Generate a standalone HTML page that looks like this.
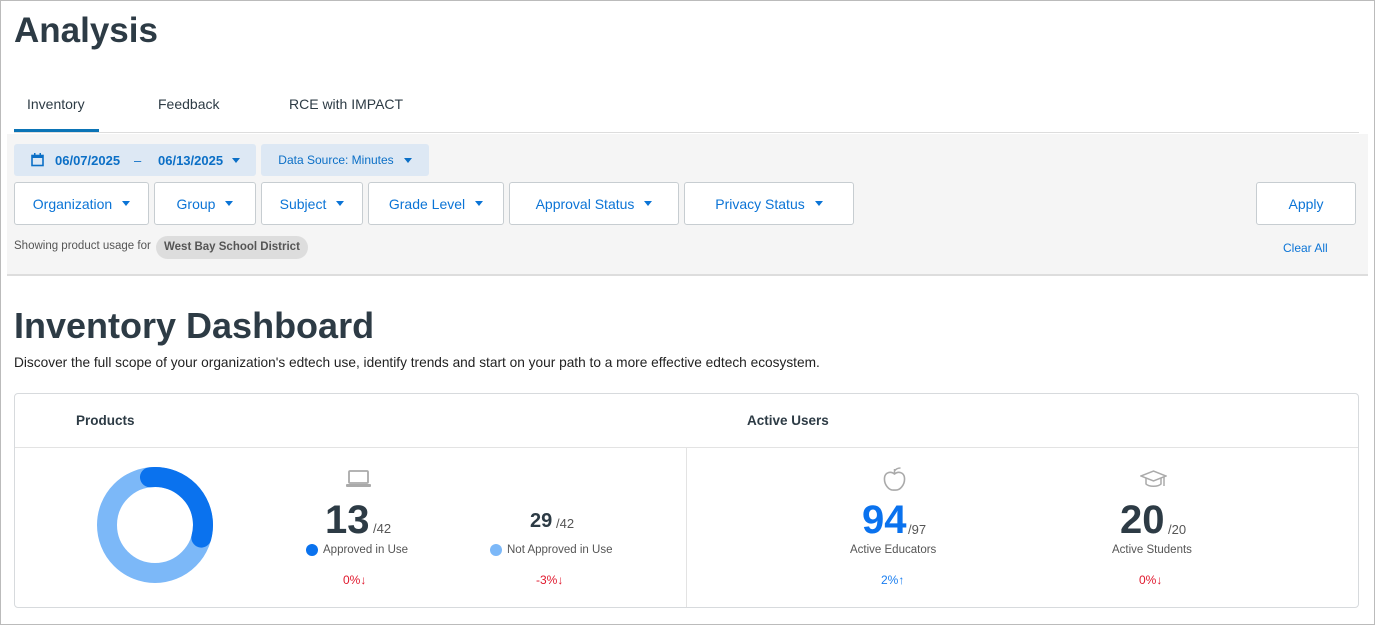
<!DOCTYPE html>
<html><head><style>
*{box-sizing:border-box;margin:0;padding:0}
body{width:1375px;height:625px;background:#fff;font-family:"Liberation Sans",sans-serif;color:#2d3b45;position:relative;overflow:hidden}
.frame{position:absolute;left:0;top:0;width:1375px;height:625px;border:1px solid #bbb;pointer-events:none}
.a{position:absolute}
h1{position:absolute;left:14px;top:11px;font-size:35px;font-weight:bold;color:#2d3b45}
.tab{position:absolute;top:96px;font-size:14px;color:#2d3b45}
.panel{position:absolute;left:7px;top:134px;width:1361px;height:142px;background:#f5f5f5;border-bottom:2px solid #ddd}
.chip{position:absolute;top:144px;height:32px;background:#dde8f4;border-radius:3px;color:#0b6fc6;font-size:13px;display:flex;align-items:center}
.btn{position:absolute;top:182px;height:43px;background:#fff;border:1px solid #c7cdd1;border-radius:3px;color:#0b74d6;font-size:14px;display:flex;align-items:center;justify-content:center}
.caret{display:inline-block;width:0;height:0;border-left:4px solid transparent;border-right:4px solid transparent;border-top:5px solid currentColor;margin-left:10px}
.num{position:absolute;text-align:center;font-weight:bold}
.pct{position:absolute;font-size:12px;text-align:center}
</style></head><body>
<h1>Analysis</h1>
<div class="tab" style="left:27px">Inventory</div>
<div class="tab" style="left:158px">Feedback</div>
<div class="tab" style="left:289px">RCE with IMPACT</div>
<div class="a" style="left:14px;top:132px;width:1345px;height:1px;background:#ddd"></div>
<div class="a" style="left:14px;top:129px;width:85px;height:3px;background:#0b74b6"></div>
<div class="panel"></div>
<div class="chip" style="left:14px;width:242px;font-weight:bold">
<svg class="a" style="left:17px;top:9px" width="13" height="14" viewBox="0 0 13 14"><rect x="1" y="2.5" width="11" height="10" fill="none" stroke="#0b6fc6" stroke-width="1.6"/><rect x="1" y="2.5" width="11" height="2.5" fill="#0b6fc6"/><rect x="3" y="0" width="1.5" height="3" fill="#0b6fc6"/><rect x="8.5" y="0" width="1.5" height="3" fill="#0b6fc6"/></svg>
<span class="a" style="left:41px">06/07/2025</span><span class="a" style="left:120px;font-weight:normal">–</span><span class="a" style="left:144px">06/13/2025</span><span class="caret a" style="left:208px;top:14px"></span></div>
<div class="chip" style="left:261px;width:168px;justify-content:center;font-size:12px">Data Source: Minutes<span class="caret"></span></div>
<div class="btn" style="left:14px;width:135px">Organization<span class="caret"></span></div>
<div class="btn" style="left:154px;width:102px">Group<span class="caret"></span></div>
<div class="btn" style="left:261px;width:102px">Subject<span class="caret"></span></div>
<div class="btn" style="left:368px;width:136px">Grade Level<span class="caret"></span></div>
<div class="btn" style="left:509px;width:170px">Approval Status<span class="caret"></span></div>
<div class="btn" style="left:684px;width:170px">Privacy Status<span class="caret"></span></div>
<div class="btn" style="left:1256px;width:100px">Apply</div>
<div class="a" style="left:14px;top:240px;font-size:11.5px;color:#555">Showing product usage for</div>
<div class="a" style="left:156px;top:236px;height:23px;padding:0 8px;background:#ddd;border-radius:12px;font-size:11.5px;font-weight:bold;color:#555;line-height:23px">West Bay School District</div>
<div class="a" style="left:1283px;top:241px;font-size:12px;color:#0b74d6">Clear All</div>
<div class="a" style="left:14px;top:305px;font-size:36px;font-weight:bold">Inventory Dashboard</div>
<div class="a" style="left:14px;top:355px;font-size:13.7px;color:#222">Discover the full scope of your organization's edtech use, identify trends and start on your path to a more effective edtech ecosystem.</div>
<div class="a" style="left:14px;top:393px;width:1345px;height:215px;border:1px solid #d7dadd;border-radius:4px"></div>
<div class="a" style="left:15px;top:447px;width:1343px;height:1px;background:#e3e3e3"></div>
<div class="a" style="left:686px;top:448px;width:1px;height:159px;background:#e3e3e3"></div>
<div class="a" style="left:76px;top:413px;font-size:13.5px;font-weight:bold">Products</div>
<div class="a" style="left:747px;top:413px;font-size:13.5px;font-weight:bold">Active Users</div>
<svg class="a" style="left:97px;top:467px" width="116" height="116" viewBox="0 0 116 116"><circle cx="58" cy="58" r="48" fill="none" stroke="#7cb8f8" stroke-width="20"/><circle cx="58" cy="58" r="48" fill="none" stroke="#0a72ee" stroke-width="20" stroke-dasharray="93 400" stroke-linecap="round" transform="rotate(-96 58 58)"/></svg>
<svg class="a" style="left:346px;top:470px" width="25" height="18" viewBox="0 0 25 18"><rect x="3" y="1" width="19" height="12" rx="1" fill="none" stroke="#aaa" stroke-width="1.8"/><rect x="0" y="14" width="25" height="3" rx="1" fill="#aaa"/></svg>
<div class="num" style="left:325px;top:498px;font-size:40px;line-height:44px">13</div><div class="a" style="left:373px;top:521px;font-size:13px;color:#555">/42</div>
<div class="a" style="left:306px;top:544px;width:12px;height:12px;border-radius:50%;background:#0a72ee"></div><div class="a" style="left:323px;top:544px;font-size:11.5px;color:#555">Approved in Use</div>
<div class="pct" style="left:343px;top:573px;color:#e0182d">0%↓</div>
<div class="num" style="left:530px;top:510px;font-size:20px">29</div><div class="a" style="left:556px;top:516px;font-size:13px;color:#555">/42</div>
<div class="a" style="left:490px;top:544px;width:12px;height:12px;border-radius:50%;background:#7cb8f8"></div><div class="a" style="left:507px;top:544px;font-size:11.5px;color:#555">Not Approved in Use</div>
<div class="pct" style="left:536px;top:573px;color:#e0182d">-3%↓</div>
<svg class="a" style="left:882px;top:466px" width="25" height="27" viewBox="0 0 25 27"><path d="M12.5 8C9 5 3 6 2.5 12c-.5 6 4 13 10 12 6 1 10.5-6 10-12-.5-6-6.5-7-10-4z" fill="none" stroke="#aaa" stroke-width="1.6"/><path d="M12.5 8V3M12.5 5c2-3 5-3 6-3" fill="none" stroke="#aaa" stroke-width="1.5"/></svg>
<div class="num" style="left:862px;top:497px;font-size:40px;line-height:46px;color:#0a72ee">94</div><div class="a" style="left:908px;top:522px;font-size:13px;color:#555">/97</div>
<div class="a" style="left:850px;top:544px;font-size:11.5px;color:#555">Active Educators</div>
<div class="pct" style="left:881px;top:573px;color:#1a7ef0">2%↑</div>
<svg class="a" style="left:1140px;top:470px" width="27" height="20" viewBox="0 0 27 20"><path d="M1 6l12.5-5 12.5 5-12.5 5z" fill="none" stroke="#aaa" stroke-width="1.5"/><path d="M6 8v6c3 3 12 3 15 0V8" fill="none" stroke="#aaa" stroke-width="1.5"/><path d="M24 7v9" stroke="#aaa" stroke-width="1.5"/></svg>
<div class="num" style="left:1120px;top:497px;font-size:40px;line-height:46px">20</div><div class="a" style="left:1168px;top:522px;font-size:13px;color:#555">/20</div>
<div class="a" style="left:1112px;top:544px;font-size:11.5px;color:#555">Active Students</div>
<div class="pct" style="left:1139px;top:573px;color:#e0182d">0%↓</div>
<div class="frame"></div>
</body></html>
